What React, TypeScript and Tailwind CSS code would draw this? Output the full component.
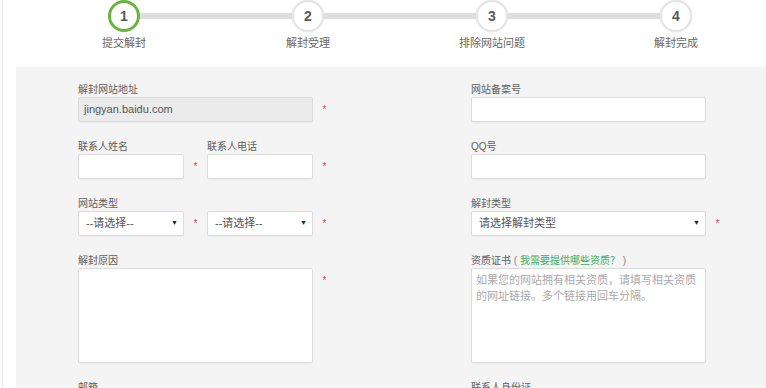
import React from "react";

const steps = ["提交解封", "解封受理", "排除网站问题", "解封完成"];

const Star = () => (
  <span className="w-[23px] shrink-0 pt-[8px] text-center text-[10px] leading-[10px] text-[#e8395a]">
    *
  </span>
);

const Label: React.FC<{ children: React.ReactNode }> = ({ children }) => (
  <div className="h-[14px] text-[10px] leading-[14px] text-[#606060]">{children}</div>
);

const Box: React.FC<{ w: string; text?: string; disabled?: boolean }> = ({ w, text, disabled }) => (
  <div
    className={`${w} h-[25px] shrink-0 rounded-[2px] border border-[#dcdcdc] px-[5px] text-[11px] leading-[23px] text-[#555] shadow-[0_1px_1px_rgba(0,0,0,0.04)] ${
      disabled ? "bg-[#ebebeb]" : "bg-white"
    }`}
  >
    {text}
  </div>
);

const Select: React.FC<{ w: string; text: string }> = ({ w, text }) => (
  <div
    className={`${w} flex h-[25px] shrink-0 items-center justify-between rounded-[2px] border border-[#dcdcdc] bg-white pl-[7px] pr-[5px] text-[11px] text-[#555] shadow-[0_1px_1px_rgba(0,0,0,0.04)]`}
  >
    <span>{text}</span>
    <span className="text-[7px] text-[#222]">▼</span>
  </div>
);

export default function App() {
  return (
    <div
      className="h-[388px] w-[766px] overflow-hidden bg-white"
      style={{ fontFamily: '"Liberation Sans", "Noto Sans CJK SC", sans-serif' }}
    >
      <div className="ml-[2px] h-full border-l border-[#e6e6e6]">
        {/* steps */}
        <div className="flex pl-[29px]">
          {steps.map((s, i) => (
            <div key={s} className="flex w-[184px] shrink-0 flex-col items-center">
              <div className="flex h-[32px] w-full items-center">
                <div className={`h-[6px] flex-1 ${i === 0 ? "" : "bg-[#dedede]"}`} />
                <div
                  className={`flex h-[32px] w-[32px] items-center justify-center rounded-full bg-white text-[14px] font-bold text-[#595959] ${
                    i === 0
                      ? "border-[3px] border-[#6cb33e]"
                      : "border-2 border-[#e4e4e4] shadow-[0_0_2px_rgba(0,0,0,0.12)]"
                  }`}
                >
                  {i + 1}
                </div>
                <div className={`h-[6px] flex-1 ${i === 3 ? "" : "bg-[#dedede]"}`} />
              </div>
              <div className="mt-[4px] text-[11px] leading-[14px] text-[#666]">{s}</div>
            </div>
          ))}
        </div>

        {/* form panel */}
        <div className="ml-[13px] mt-[17px] flex bg-[#f4f4f4] pl-[62px] pt-[16px] shadow-[0_-2px_3px_rgba(0,0,0,0.02)]">
          {/* left column */}
          <div className="w-[393px] shrink-0">
            <Label>解封网站地址</Label>
            <div className="flex">
              <Box w="w-[235px]" text="jingyan.baidu.com" disabled />
              <Star />
            </div>

            <div className="mt-[18px] flex">
              <div>
                <Label>联系人姓名</Label>
                <div className="flex">
                  <Box w="w-[106px]" />
                  <Star />
                </div>
              </div>
              <div>
                <Label>联系人电话</Label>
                <div className="flex">
                  <Box w="w-[106px]" />
                  <Star />
                </div>
              </div>
            </div>

            <div className="mt-[18px]">
              <Label>网站类型</Label>
              <div className="flex">
                <Select w="w-[106px]" text="--请选择--" />
                <Star />
                <Select w="w-[106px]" text="--请选择--" />
                <Star />
              </div>
            </div>

            <div className="mt-[18px]">
              <Label>解封原因</Label>
              <div className="flex">
                <div className="h-[95px] w-[235px] shrink-0 rounded-[2px] border border-[#dcdcdc] bg-white shadow-[0_1px_1px_rgba(0,0,0,0.04)]" />
                <Star />
              </div>
            </div>

            <div className="mt-[18px]">
              <Label>邮箱</Label>
            </div>
          </div>

          {/* right column */}
          <div className="w-[260px] shrink-0">
            <Label>网站备案号</Label>
            <Box w="w-[235px]" />

            <div className="mt-[18px]">
              <Label>QQ号</Label>
              <Box w="w-[235px]" />
            </div>

            <div className="mt-[18px]">
              <Label>解封类型</Label>
              <div className="flex">
                <Select w="w-[235px]" text="请选择解封类型" />
                <Star />
              </div>
            </div>

            <div className="mt-[18px]">
              <Label>
                资质证书 <span className="text-[#888]">(</span>{" "}
                <span className="text-[#3fae5f]">我需要提供哪些资质？</span>{" "}
                <span className="text-[#888]">)</span>
              </Label>
              <div className="h-[95px] w-[235px] rounded-[2px] border border-[#dcdcdc] bg-white pl-[4px] pt-[3px] text-[11px] leading-[16px] text-[#aaa] shadow-[0_1px_1px_rgba(0,0,0,0.04)]">
                <div className="whitespace-nowrap">如果您的网站拥有相关资质，请填写相关资质</div>
                <div className="whitespace-nowrap">的网址链接。多个链接用回车分隔。</div>
              </div>
            </div>

            <div className="mt-[18px]">
              <Label>联系人身份证</Label>
            </div>
          </div>
        </div>
      </div>
    </div>
  );
}
